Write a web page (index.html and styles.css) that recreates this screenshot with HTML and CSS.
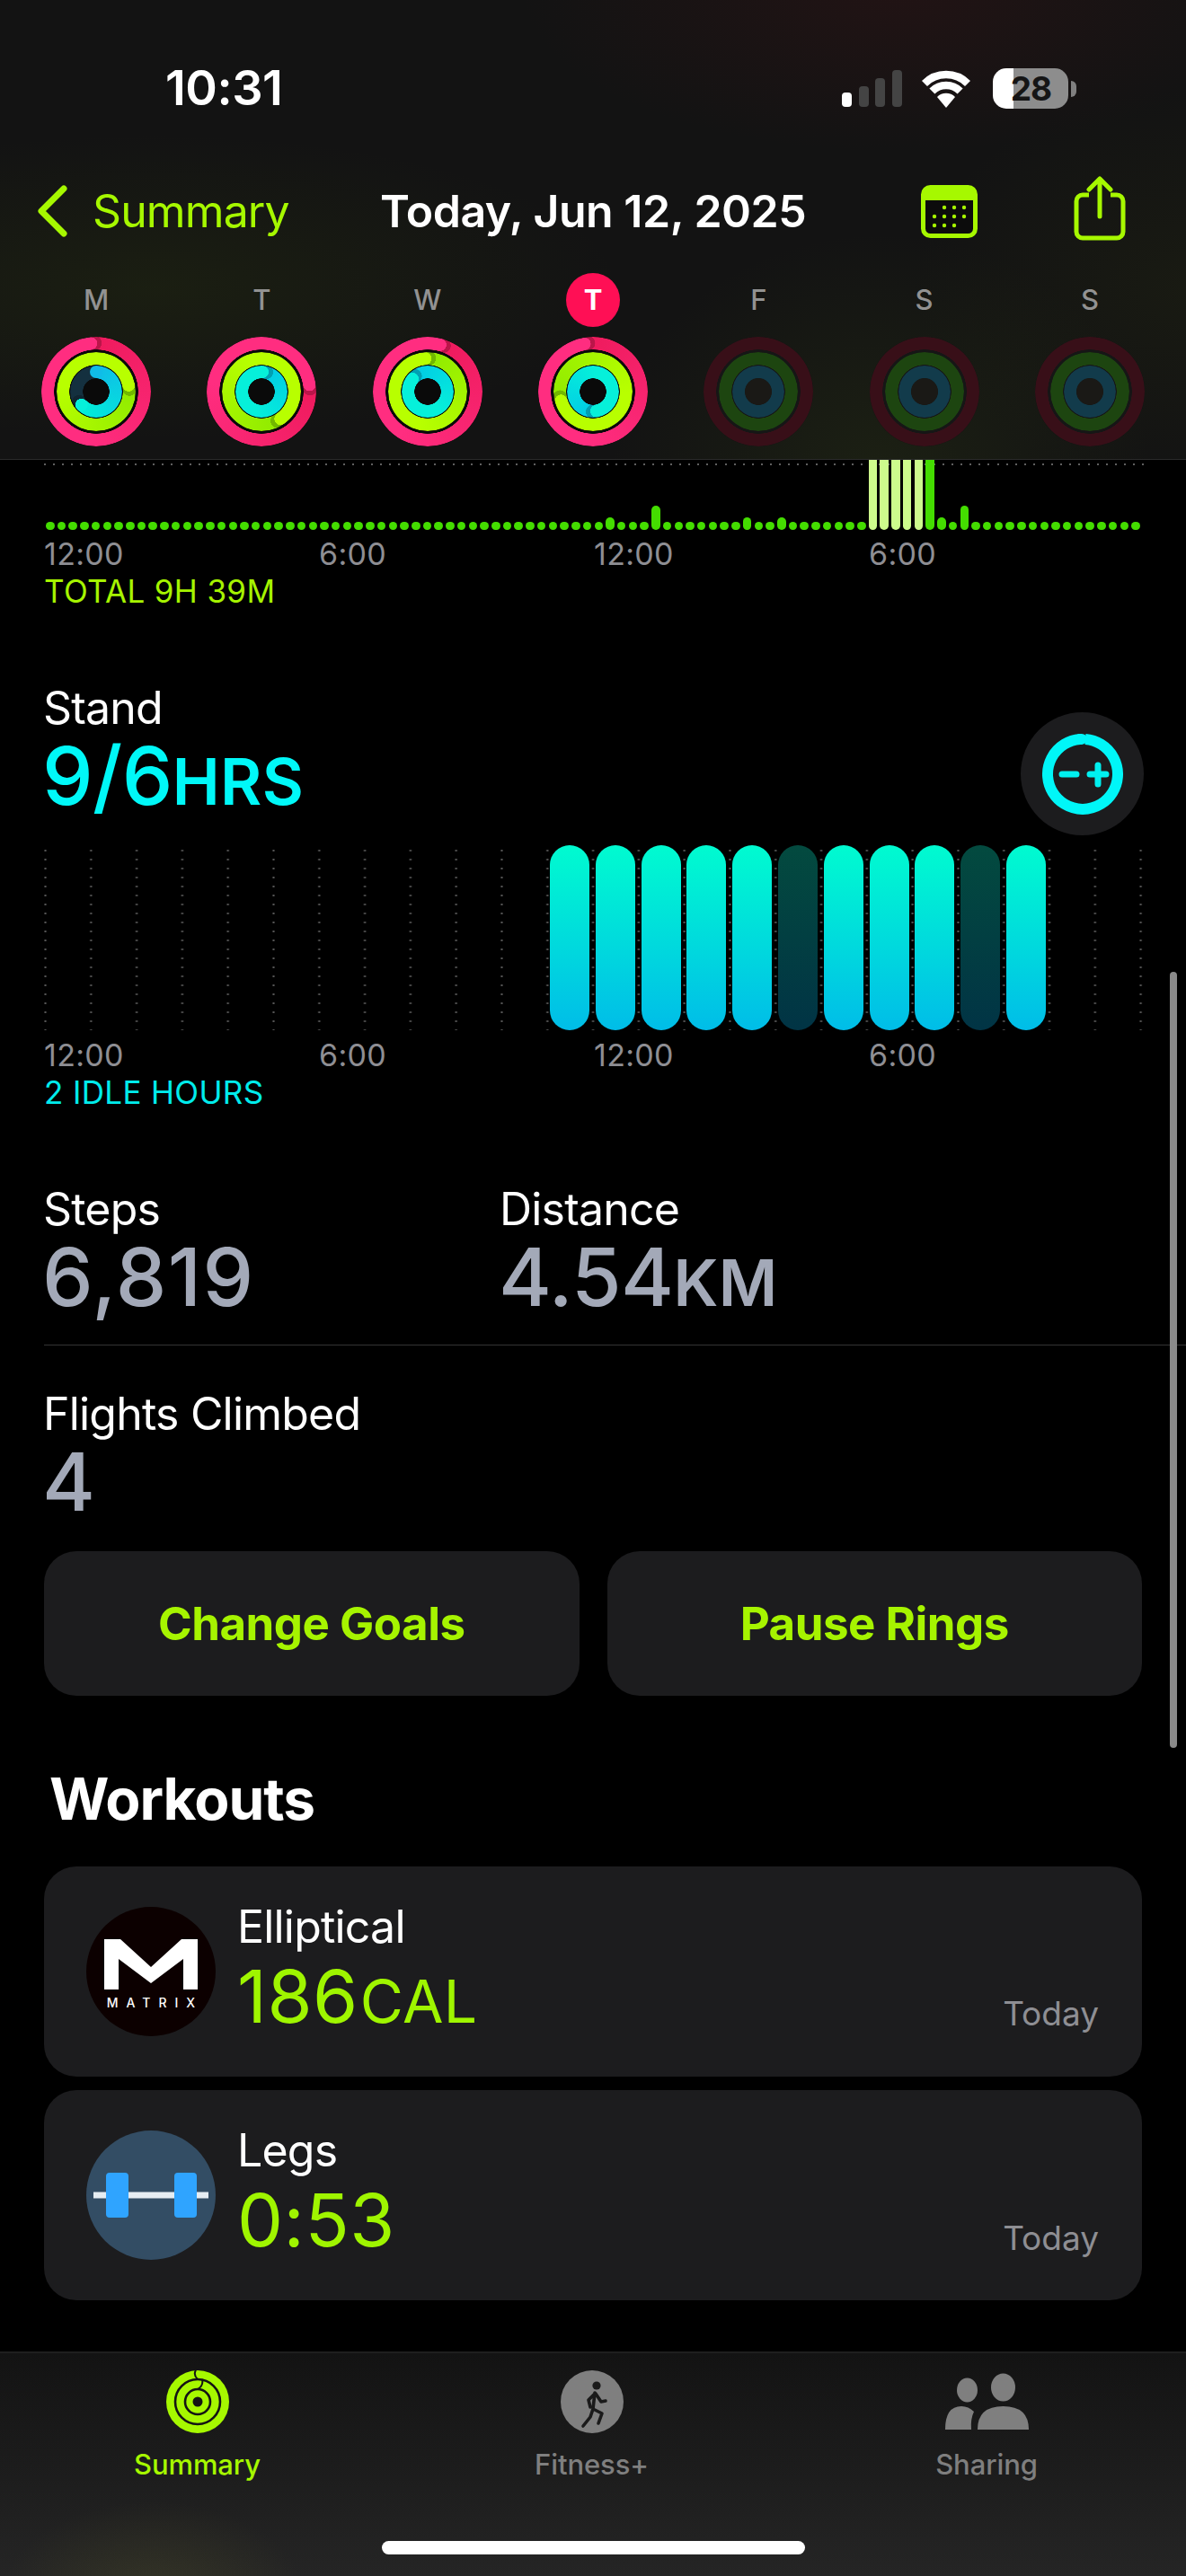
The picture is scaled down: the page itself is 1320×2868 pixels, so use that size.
FILE: index.html
```html
<!DOCTYPE html>
<html lang="en">
<head>
<meta charset="utf-8">
<title>Activity</title>
<link rel="stylesheet" href="styles.css">
</head>
<body>
<div class="app">
  <header class="header">
    <div class="status">
      <span class="time">10:31</span>
      <div class="signal"><i class="on s1"></i><i class="s2"></i><i class="s3"></i><i class="s4"></i></div>
      <svg class="wifi" viewBox="0 0 58 43" width="58" height="43"><path d="M5 16A34 34 0 0 1 53 16M13.4 24.4A22 22 0 0 1 44.6 24.4" fill="none" stroke="#fff" stroke-width="8.5"/><path d="M29 43L19 31A14 14 0 0 1 39 31Z" fill="#fff"/></svg>
      <div class="battery"><span class="battery-level">28</span></div>
    </div>
    <nav class="nav">
      <div class="back">
        <svg viewBox="0 0 36 58" width="36" height="58"><path d="M31 4L6 29L31 54" fill="none" stroke="#a6f800" stroke-width="7" stroke-linecap="round" stroke-linejoin="round"/></svg>
        <span>Summary</span>
      </div>
      <h1 class="title">Today, Jun 12, 2025</h1>
      <svg class="cal" viewBox="0 0 63 59" width="63" height="59"><rect x="2.5" y="2.5" width="58" height="54" rx="8" fill="#0c0c0c" stroke="#a6f800" stroke-width="5"/><path d="M3 10a7 7 0 0 1 7-7h43a7 7 0 0 1 7 7v7H3Z" fill="#a6f800"/><g fill="#a6f800"><circle cx="26" cy="25" r="2.2"/><circle cx="37" cy="25" r="2.2"/><circle cx="48" cy="25" r="2.2"/><circle cx="15" cy="35" r="2.2"/><circle cx="26" cy="35" r="2.2"/><circle cx="37" cy="35" r="2.2"/><circle cx="48" cy="35" r="2.2"/><circle cx="15" cy="45" r="2.2"/><circle cx="26" cy="45" r="2.2"/><circle cx="37" cy="45" r="2.2"/></g></svg>
      <svg class="share" viewBox="0 0 58 72" width="58" height="72"><path d="M17 21H10a7 7 0 0 0-7 7v34a7 7 0 0 0 7 7h38a7 7 0 0 0 7-7V28a7 7 0 0 0-7-7H41" fill="none" stroke="#a6f800" stroke-width="5"/><path d="M29 45V4M17 15L29 3L41 15" fill="none" stroke="#a6f800" stroke-width="5" stroke-linecap="round" stroke-linejoin="round"/></svg>
    </nav>
    <div class="week">
      <div class="day"><span class="dlabel">M</span><div class="rings"><i class="arc pink" style="--h:354deg"></i><i class="arc green" style="--h:79deg"></i><i class="arc blue part" style="--h:228deg"></i></div></div>
      <div class="day"><span class="dlabel">T</span><div class="rings"><i class="arc pink" style="--h:82deg"></i><i class="arc green" style="--h:145deg"></i><i class="arc blue" style="--h:3deg"></i></div></div>
      <div class="day"><span class="dlabel">W</span><div class="rings"><i class="arc pink" style="--h:15deg"></i><i class="arc green" style="--h:356deg"></i><i class="arc blue" style="--h:310deg"></i></div></div>
      <div class="day"><span class="dlabel today">T</span><div class="rings"><i class="arc pink" style="--h:350deg"></i><i class="arc green" style="--h:254deg"></i><i class="arc blue" style="--h:170deg"></i></div></div>
      <div class="day"><span class="dlabel">F</span><div class="rings off"><i class="arc"></i><i class="arc"></i><i class="arc"></i></div></div>
      <div class="day"><span class="dlabel">S</span><div class="rings off"><i class="arc"></i><i class="arc"></i><i class="arc"></i></div></div>
      <div class="day"><span class="dlabel">S</span><div class="rings off"><i class="arc"></i><i class="arc"></i><i class="arc"></i></div></div>
    </div>
  </header>

  <main class="content">
    <div class="energy"><i></i><i></i><i></i><i></i><i></i><i></i><i></i><i></i><i></i><i></i><i></i><i></i><i></i><i></i><i></i><i></i><i></i><i></i><i></i><i></i><i></i><i></i><i></i><i></i><i></i><i></i><i></i><i></i><i></i><i></i><i></i><i></i><i></i><i></i><i></i><i></i><i></i><i></i><i></i><i></i><i></i><i></i><i></i><i></i><i></i><i></i><i></i><i></i><i></i><i class="m"></i><i></i><i></i><i></i><i class="t"></i><i></i><i></i><i></i><i></i><i></i><i></i><i></i><i class="m"></i><i></i><i></i><i class="m"></i><i></i><i></i><i></i><i></i><i></i><i></i><i></i><i class="l"></i><i class="l"></i><i class="l"></i><i class="l"></i><i class="l"></i><i class="g"></i><i class="m"></i><i></i><i class="t"></i><i></i><i></i><i></i><i></i><i></i><i></i><i></i><i></i><i></i><i></i><i></i><i></i><i></i><i></i><i></i></div>
    <div class="axis"><span>12:00</span><span>6:00</span><span>12:00</span><span>6:00</span></div>
    <p class="note lime">TOTAL 9H 39M</p>

    <section class="stand">
      <div class="stand-head">
        <div>
          <h2 class="label">Stand</h2>
          <p class="big cyan">9/6<span class="unit">HRS</span></p>
        </div>
        <div class="adjust">
          <svg viewBox="0 0 90 92" width="90" height="92"><path d="M48 7A39 39 0 1 1 42 7" fill="none" stroke="#00f6f8" stroke-width="12"/><path d="M42 7A39 39 0 0 1 44 6.9" fill="none" stroke="#00f6f8" stroke-width="12" stroke-linecap="round"/><path d="M22 46H38M53 46H71M62 36V57" fill="none" stroke="#00f0f0" stroke-width="7" stroke-linecap="round"/></svg>
        </div>
      </div>
      <div class="hours">
        <span></span><span></span><span></span><span></span><span></span><span></span><span></span><span></span><span></span><span></span><span></span>
        <span class="bar"></span><span class="bar"></span><span class="bar"></span><span class="bar"></span><span class="bar"></span><span class="bar idle"></span><span class="bar"></span><span class="bar"></span><span class="bar"></span><span class="bar idle"></span><span class="bar"></span>
      </div>
      <div class="axis axis-stand"><span>12:00</span><span>6:00</span><span>12:00</span><span>6:00</span></div>
      <p class="note cyan-note">2 IDLE HOURS</p>
    </section>

    <section class="metrics">
      <div class="metric-row">
        <div class="metric">
          <h2 class="label">Steps</h2>
          <p class="big gray steps">6,819</p>
        </div>
        <div class="metric">
          <h2 class="label">Distance</h2>
          <p class="big gray">4.54<span class="unit">KM</span></p>
        </div>
      </div>
      <div class="metric flights">
        <h2 class="label">Flights Climbed</h2>
        <p class="big gray">4</p>
      </div>
    </section>

    <div class="actions">
      <button class="action">Change Goals</button>
      <button class="action">Pause Rings</button>
    </div>

    <h2 class="section-title">Workouts</h2>
    <div class="cards">
      <article class="card">
        <div class="logo logo-matrix">
          <svg viewBox="0 0 104 56" width="104" height="56"><path d="M0 56V0H18L52 31L86 0H104V56H88V22L52 49L16 22V56Z" fill="#fff"/></svg>
          <span class="matrix-text">MATRIX</span>
        </div>
        <div class="card-body">
          <h3 class="label">Elliptical</h3>
          <p class="work-value">186<span class="work-unit">CAL</span></p>
        </div>
        <span class="when">Today</span>
      </article>
      <article class="card">
        <div class="logo logo-legs">
          <svg viewBox="0 0 128 50" width="128" height="50"><rect x="0" y="21.5" width="128" height="7" fill="#e6edf2"/><rect x="14" y="0" width="25" height="50" rx="4" fill="#2fa4ff"/><rect x="90" y="0" width="25" height="50" rx="4" fill="#2fa4ff"/></svg>
        </div>
        <div class="card-body">
          <h3 class="label">Legs</h3>
          <p class="work-value">0:53</p>
        </div>
        <span class="when">Today</span>
      </article>
    </div>
    <div class="scrollbar"></div>
  </main>

  <footer class="tabbar">
    <div class="tabs">
      <div class="tab active">
        <svg viewBox="0 0 70 70" width="70" height="70"><circle cx="35" cy="35" r="35" fill="#a6f800"/><g fill="none" stroke="#141414" stroke-width="2.6"><circle cx="35" cy="35" r="25"/><circle cx="35" cy="35" r="14"/></g><circle cx="35" cy="35" r="5.5" fill="#141414"/><path d="M35 10C31 6 31 3 33 0M35 21C40 18 41 14 40 10" fill="none" stroke="#141414" stroke-width="2"/></svg>
        <span>Summary</span>
      </div>
      <div class="tab">
        <svg viewBox="0 0 70 70" width="70" height="70"><circle cx="35" cy="35" r="35" fill="#7f7f7f"/><circle cx="40" cy="17" r="4.6" fill="#1a1a1a"/><path d="M38 25L36 43M38 26L31 33L33 41M39 26L45 35L50 34M36 43L46 48L42 59M36 43L33 52L25 62" fill="none" stroke="#1a1a1a" stroke-width="3.6" stroke-linecap="round" stroke-linejoin="round"/></svg>
        <span>Fitness+</span>
      </div>
      <div class="tab">
        <svg viewBox="0 0 93 70" width="93" height="70"><g fill="#7f7f7f"><ellipse cx="24.5" cy="22" rx="11.5" ry="13.5"/><ellipse cx="64.5" cy="19" rx="13.5" ry="15.5"/><path d="M36 66Q36 40 64.5 40Q93 40 93 66Z"/><path d="M0 66Q0 40 18 40Q26 40 32 46Q28 54 29 66Z"/></g></svg>
        <span>Sharing</span>
      </div>
    </div>
    <div class="home"></div>
  </footer>
</div>
</body>
</html>
```
FILE: styles.css
```css
* { box-sizing: border-box; margin: 0; padding: 0; }
html, body { background: #000; }
body { width: 1320px; height: 2868px; overflow: hidden; font-family: Inter, "Liberation Sans", sans-serif; color: #fff; }
.app { width: 1320px; height: 2868px; display: flex; flex-direction: column; }

/* header */
.header {
  height: 512px; flex: none; padding-top: 66px; border-bottom: 1px solid #2b2b2b;
  background:
    radial-gradient(ellipse 420px 180px at 1000px -10px, rgba(90, 20, 25, .2), transparent),
    radial-gradient(ellipse 520px 170px at 170px 320px, rgba(70, 95, 10, .15), transparent),
    radial-gradient(ellipse 300px 260px at 980px 520px, rgba(70, 95, 20, .17), transparent),
    radial-gradient(ellipse 300px 220px at 1320px 320px, rgba(60, 70, 15, .14), transparent),
    #131313;
}
.status { height: 64px; display: flex; align-items: center; padding-left: 184px; }
.time { width: 753px; font-size: 54px; font-weight: 600; letter-spacing: -.5px; line-height: 64px; }
.signal { display: flex; align-items: flex-end; gap: 7.5px; height: 41px; width: 87px; }
.signal i { width: 11px; border-radius: 4px; background: #444; }
.signal .on { background: #fff; }
.s1 { height: 16px; } .s2 { height: 23px; } .s3 { height: 32px; } .s4 { height: 41px; }
.wifi { flex: none; width: 58px; margin-right: 23px; }
.battery { width: 84px; height: 45px; border-radius: 15px; background: linear-gradient(90deg, #fff 27%, #8d8d8d 27%); display: flex; align-items: center; justify-content: center; position: relative; }
.battery::after { content: ""; position: absolute; right: -9px; top: 14px; width: 6px; height: 18px; border-radius: 0 6px 6px 0; background: #808080; }
.battery-level { color: #151515; font-size: 37px; font-weight: 700; letter-spacing: -1px; line-height: 45px; margin-left: 1px; }

.nav { display: flex; align-items: center; height: 74px; margin-top: 68px; padding-left: 40px; }
.back { display: flex; align-items: center; gap: 27px; width: 383px; color: #a6f800; font-size: 50px; letter-spacing: -.9px; line-height: 74px; }
.title { width: 473px; font-size: 50px; font-weight: 600; letter-spacing: -.45px; line-height: 74px; white-space: nowrap; }
.cal { flex: none; margin-left: 129px; }
.share { flex: none; margin-left: 107px; margin-top: -7px; }

.week { display: grid; grid-template-columns: repeat(7, 184.3px); padding-left: 15px; margin-top: 32px; }
.day { display: flex; flex-direction: column; align-items: center; gap: 11px; }
.dlabel { width: 60px; height: 60px; border-radius: 50%; text-align: center; line-height: 60px; font-size: 31px; font-weight: 500; color: #929292; }
.today { background: #ff0f55; color: #fff; font-weight: 700; }

.rings { position: relative; width: 122px; height: 122px; border-radius: 50%; background: #0a0a0a; }
.arc { position: absolute; border-radius: 50%; --a: #ee1a5c; --b: #ff2d80;
  background: conic-gradient(from var(--h, 0deg), var(--a), var(--b) 55%, var(--b));
  -webkit-mask: radial-gradient(closest-side, transparent calc(100% - 14.5px), #000 calc(100% - 14px));
  mask: radial-gradient(closest-side, transparent calc(100% - 14.5px), #000 calc(100% - 14px));
}
.arc::after { content: ""; position: absolute; inset: 0; transform: rotate(var(--h, 0deg));
  background:
    radial-gradient(circle 7px at 50% 7px, var(--b) 96%, transparent),
    radial-gradient(circle 8px at calc(50% + 4px) 7px, rgba(0, 0, 0, .22) 96%, transparent);
}
.arc:nth-child(1) { inset: 0; }
.arc:nth-child(2) { inset: 17px; }
.arc:nth-child(3) { inset: 32px; }
.green { --a: #8fea00; --b: #b8ff00; }
.blue { --a: #00c8e6; --b: #06f0da; }
.blue.part { background: conic-gradient(#10bce8, #00f0d8 var(--h), #14303f var(--h)); }
.blue.part::before { content: ""; position: absolute; left: 50%; margin-left: -7px; top: 0; width: 14px; height: 14px; border-radius: 50%; background: #10bce8; z-index: 1; }
.off { background: #161616; }
.off .arc { background: #380f18; }
.off .arc::after { display: none; }
.off .arc:nth-child(2) { background: #1d4510; }
.off .arc:nth-child(3) { background: #123b4b; }
.off::after { content: ""; position: absolute; inset: 46px; border-radius: 50%; background: #1a1916; }

/* content */
.content { flex: 1; position: relative; padding: 0 49px; overflow: hidden; background: #000; }
.energy {
  height: 78px; margin-right: -2px; padding-left: 2px; display: flex; align-items: flex-end; gap: 3.22px;
  background: repeating-linear-gradient(90deg, #606060 0 2px, transparent 2px 10.1px) 0 4px / 100% 2px no-repeat;
}
.energy i { flex: none; width: 9.5px; height: 9.5px; border-radius: 5px; background: #44dd00; }
.energy .m { height: 14px; }
.energy .t { height: 27px; }
.energy .l { height: 78px; background: #cdfb8c; border-radius: 0 0 5px 5px; }
.energy .g { height: 78px; border-radius: 0 0 5px 5px; }

.axis { display: grid; grid-template-columns: repeat(4, 306px); margin-top: 8px; font-size: 34px; letter-spacing: .3px; line-height: 38px; color: #8e8e93; }
.note { font-size: 35px; letter-spacing: .35px; line-height: 40px; margin-top: 2px; }
.lime { color: #a6f400; }
.cyan-note { color: #00ecec; }

.stand { padding-top: 80px; }
.stand-head { display: flex; justify-content: space-between; height: 183px; }
.label { font-size: 50px; font-weight: 400; line-height: 56px; letter-spacing: -.8px; margin: 2px 0 0 -1px; }
.big { font-size: 90px; font-weight: 500; line-height: 96px; letter-spacing: -.6px; white-space: nowrap; margin-left: -2px; }
.steps { letter-spacing: 1.4px; }
.unit { font-size: 71px; font-weight: 600; letter-spacing: .3px; }
.cyan { color: #00f8f8; }
.gray { color: #a3a9b8; }
.adjust { width: 137px; height: 137px; margin: 35px -2px 0 0; border-radius: 50%; background: #1c1c1e; display: flex; align-items: center; justify-content: center; flex: none; }
.hours {
  display: grid; grid-template-columns: repeat(24, 50.8px); height: 206px; margin-right: -2px;
  background: radial-gradient(circle, #555 .9px, transparent 1.4px) -23.9px 1px / 50.8px 10px;
}
.bar { width: 44px; margin-left: 12.2px; transform: translateX(-8px); border-radius: 22px; background: linear-gradient(#00fbd0, #00bde8); }
.idle { background: linear-gradient(#034a3f, #013445); }
.axis-stand { margin-top: 9px; }

.metrics { padding-top: 80px; }
.metric-row { display: grid; grid-template-columns: 508px 1fr; height: 182px; margin-right: -49px; border-bottom: 1px solid #333; }
.flights { padding-top: 46px; height: 207px; }
.actions { display: grid; grid-template-columns: 1fr 1fr; gap: 31px; margin-top: 22px; }
.action { height: 161px; border: 0; border-radius: 36px; background: #1c1c1e; color: #a6f400; font-family: inherit; font-size: 51px; font-weight: 700; letter-spacing: -.5px; }
.section-title { margin: 75px 0 35px 6px; font-size: 64px; font-weight: 700; line-height: 80px; letter-spacing: -1px; }

.cards { display: flex; flex-direction: column; gap: 15px; }
.card { height: 234px; border-radius: 36px; background: #1c1c1e; display: flex; padding: 45px 48px 0 47px; position: relative; }
.logo { flex: none; width: 144px; height: 144px; border-radius: 50%; display: flex; flex-direction: column; align-items: center; justify-content: center; }
.logo-matrix { background: #0c0000; gap: 8px; padding-top: 6px; }
.matrix-text { font-size: 14px; letter-spacing: 9px; margin-right: -9px; line-height: 14px; font-weight: 500; }
.logo-legs { background: #334d64; }
.card-body { margin-left: 25px; flex: 1; margin-top: -8px; }
.work-value { font-size: 81px; line-height: 100px; color: #9ff500; letter-spacing: .5px; white-space: nowrap; margin-left: -1px; }
.work-unit { font-size: 66px; letter-spacing: .3px; margin-left: 2px; }
.when { align-self: flex-end; margin-bottom: 47px; font-size: 37px; line-height: 46px; color: #8e8e93; }
.card:last-child .when { margin-bottom: 46px; }

.scrollbar { position: absolute; right: 10px; top: 570px; width: 8px; height: 864px; border-radius: 4px; background: #8a8a8a; }

/* tab bar */
.tabbar {
  height: 250px; flex: none; border-top: 2px solid #1f1f1f; padding-top: 19px; position: relative;
  background:
    radial-gradient(ellipse 170px 110px at 170px 275px, rgba(90, 90, 40, .3), transparent),
    linear-gradient(#131313, #252525);
}
.tabs { display: grid; grid-template-columns: 439px 439px 440px; }
.tab { display: flex; flex-direction: column; align-items: center; gap: 17px; color: #7f7f7f; font-size: 31px; font-weight: 500; letter-spacing: -.1px; line-height: 36px; }
.tab.active { color: #a6f800; }
.home { position: absolute; left: 425px; top: 209px; width: 471px; height: 15px; border-radius: 8px; background: #fff; }
```
